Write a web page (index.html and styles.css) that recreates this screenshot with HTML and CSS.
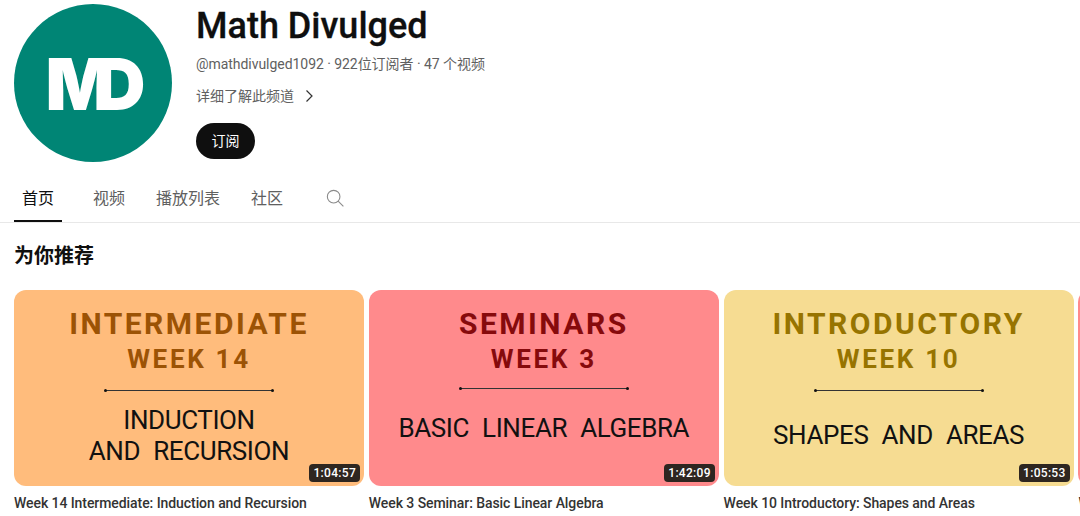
FILE: index.html
```html
<html>
    <head>
        <title>Math Divulged</title>
        <link rel="stylesheet" href="styles.css">
    </head>
    <body>
        <header class="channel">
            <div class="avatar"><span class="logo">MD</span></div>
            <div class="info">
                <h1>Math Divulged</h1>
                <p class="meta">@mathdivulged1092 · 922位订阅者 · 47 个视频</p>
                <p class="more">详细了解此频道
                    <svg width="24" height="24" viewBox="0 0 24 24"><path d="M9.5 6.5 15 12l-5.5 5.5" fill="none" stroke="#333" stroke-width="1.2"/></svg>
                </p>
                <button class="subscribe">订阅</button>
            </div>
        </header>
        <nav class="tabs">
            <a class="tab active">首页</a>
            <a class="tab">视频</a>
            <a class="tab">播放列表</a>
            <a class="tab">社区</a>
            <svg class="search" width="18" height="18" viewBox="0 0 20 20"><circle cx="8.5" cy="8.5" r="7" fill="none" stroke="#8a8a8a" stroke-width="1.2"/><path d="m13.5 13.5 5.8 5.8" stroke="#8a8a8a" stroke-width="1.2"/></svg>
        </nav>
        <h2>为你推荐</h2>
        <section class="videos">
            <article class="video">
                <div class="thumb orange">
                    <div class="level">INTERMEDIATE</div>
                    <div class="week">WEEK 14</div>
                    <div class="rule"></div>
                    <div class="topic">INDUCTION<br>AND RECURSION</div>
                    <span class="time">1:04:57</span>
                </div>
                <p class="title">Week 14 Intermediate: Induction and Recursion</p>
            </article>
            <article class="video">
                <div class="thumb red">
                    <div class="level">SEMINARS</div>
                    <div class="week">WEEK 3</div>
                    <div class="rule"></div>
                    <div class="topic">BASIC LINEAR ALGEBRA</div>
                    <span class="time">1:42:09</span>
                </div>
                <p class="title">Week 3 Seminar: Basic Linear Algebra</p>
            </article>
            <article class="video">
                <div class="thumb yellow">
                    <div class="level">INTRODUCTORY</div>
                    <div class="week">WEEK 10</div>
                    <div class="rule"></div>
                    <div class="topic">SHAPES AND AREAS</div>
                    <span class="time">1:05:53</span>
                </div>
                <p class="title">Week 10 Introductory: Shapes and Areas</p>
            </article>
            <article class="video">
                <div class="thumb red"></div>
                <p class="title">Week</p>
            </article>
        </section>
    </body>
</html>
```

FILE: styles.css
```css
html, body {
    margin: 0;
    height: 516px;
    overflow: hidden;
    background: #fff;
}
body {
    font-family: "Roboto", "Noto Sans CJK SC", sans-serif;
    color: #0f0f0f;
}
p, h1, h2 {
    margin: 0;
}

.channel {
    display: flex;
    gap: 24px;
    padding: 4px 0 0 14px;
    height: 167px;
    box-sizing: border-box;
}
.avatar {
    width: 158px;
    height: 158px;
    border-radius: 50%;
    background: #008575;
    color: #fff;
    display: flex;
    align-items: center;
    justify-content: center;
    flex-shrink: 0;
}
.logo {
    font-family: "Inter", sans-serif;
    font-weight: 900;
    font-size: 72px;
    letter-spacing: -21px;
    margin-right: 16px;
}
h1 {
    font-size: 36px;
    font-weight: 500;
    line-height: 42px;
    margin-bottom: 7px;
    padding-top: 1px;
    -webkit-text-stroke: 0.3px #0f0f0f;
}
.meta, .more {
    font-size: 14px;
    line-height: 20px;
    color: #606060;
}
.meta {
    letter-spacing: -0.05px;
}
.more {
    display: flex;
    align-items: center;
    margin-top: 10px;
    gap: 3px;
    height: 24px;
}
.subscribe {
    display: block;
    margin-top: 15px;
    width: 59px;
    height: 36px;
    border: none;
    border-radius: 18px;
    background: #0f0f0f;
    color: #fff;
    font-family: inherit;
    font-size: 14px;
    padding: 0 0 3px;
}

.tabs {
    display: flex;
    align-items: center;
    height: 55px;
    border-bottom: 1px solid #e8e8e8;
    padding-left: 14px;
}
.tab {
    font-size: 16px;
    color: #606060;
    height: 54px;
    line-height: 28px;
    box-sizing: border-box;
    padding: 17px 8px 0;
    margin-right: 15px;
}
.tab.active {
    color: #0f0f0f;
    border-bottom: 2px solid #0f0f0f;
    margin-right: 23px;
}
.search {
    margin-left: 20px;
    margin-top: 7px;
}

h2 {
    font-size: 20px;
    font-weight: 700;
    line-height: 28px;
    padding: 19px 0 20px 14px;
}

.videos {
    display: flex;
    gap: 4.8px;
    padding-left: 14px;
    width: 1200px;
}
.video {
    width: 350px;
    flex-shrink: 0;
}
.thumb {
    position: relative;
    height: 196px;
    border-radius: 12px;
    text-align: center;
    font-family: "Roboto", sans-serif;
    color: #111;
    box-sizing: border-box;
    padding-top: 16px;
}
.orange { background: #ffbc7c; }
.red { background: #ff8a8c; }
.yellow { background: #f6dc92; }

.level {
    font-size: 30px;
    line-height: 36px;
    font-weight: 700;
    letter-spacing: 2.5px;
}
.week {
    font-size: 26px;
    line-height: 34px;
    font-weight: 700;
    letter-spacing: 2.7px;
}
.orange .level, .orange .week { color: #9c5305; }
.red .level, .red .week { color: #860a0c; }
.yellow .level, .yellow .week { color: #977400; }

.rule {
    width: 168px;
    height: 1px;
    background: #333;
    margin: 14px auto 0;
    position: relative;
}
.rule::before, .rule::after {
    content: "";
    position: absolute;
    top: -1px;
    width: 3px;
    height: 3px;
    border-radius: 50%;
    background: #111;
}
.rule::before { left: -1px; }
.rule::after { right: -1px; }

.topic {
    font-size: 26px;
    line-height: 31px;
    letter-spacing: -0.4px;
    word-spacing: 7px;
    margin-top: 14px;
}
.red .topic { margin-top: 24px; }
.yellow .topic { margin-top: 29px; }
.red .rule { margin-top: 12px; }

.time {
    position: absolute;
    right: 4px;
    bottom: 4px;
    height: 18px;
    line-height: 18px;
    padding: 0 4px;
    border-radius: 4px;
    background: #2e2620;
    color: #fff;
    font-size: 12px;
    font-weight: 500;
    letter-spacing: 0.3px;
}
.title {
    font-size: 14px;
    font-weight: 500;
    line-height: 20px;
    letter-spacing: -0.07px;
    color: #333;
    margin-top: 7px;
}
```
